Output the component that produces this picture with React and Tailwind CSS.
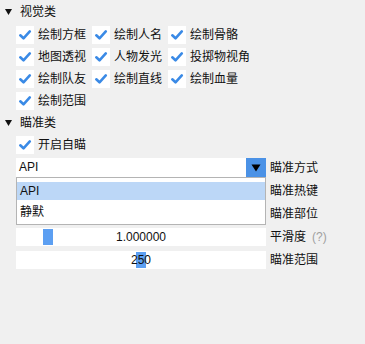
import { useState } from 'react'

const VISUAL = [
  '绘制方框', '绘制人名', '绘制骨骼',
  '地图透视', '人物发光', '投掷物视角',
  '绘制队友', '绘制直线', '绘制血量',
  '绘制范围',
]

function Check({ label }) {
  return (
    <div className="flex items-center h-[18px]">
      <div className="w-[18px] h-[18px] bg-white flex items-center justify-center shrink-0">
        <svg width="14" height="14" viewBox="0 0 14 14">
          <path d="M2.3 7.3 L5.5 10.3 L11.8 3.4" fill="none" stroke="#3a8ae6" strokeWidth="2.6" strokeLinecap="round" strokeLinejoin="round" />
        </svg>
      </div>
      <span className="ml-[4px] whitespace-nowrap">{label}</span>
    </div>
  )
}

function Header({ title }) {
  return (
    <div className="flex items-center h-[18px]">
      <svg className="ml-[5px] mr-[8px]" width="7" height="6" viewBox="0 0 7 6">
        <path d="M0 0 H7 L3.5 6 Z" fill="#111" />
      </svg>
      <span>{title}</span>
    </div>
  )
}

function Slider({ value, grab }) {
  return (
    <div className="relative w-[250px] h-[18px] bg-white flex items-center justify-center">
      <div className="absolute top-[1px] h-[16px] w-[10px] bg-[#5c9ff2]" style={{ left: grab }} />
      <span className="relative">{value}</span>
    </div>
  )
}

export default function App() {
  const [open] = useState(true)

  return (
    <div className="relative w-[365px] h-[344px] bg-[#f0f0f0] overflow-hidden text-[12px] leading-[18px] text-[#111] font-['Liberation_Sans','Noto_Sans_CJK_SC',sans-serif]">
      <div className="pt-[3px]">
        <Header title="视觉类" />

        <div className="mt-[5px] pl-[16px] grid grid-cols-[76px_76px_98px] gap-y-[4px]">
          {VISUAL.map(v => <Check key={v} label={v} />)}
        </div>

        <div className="mt-[4px]">
          <Header title="瞄准类" />
        </div>

        <div className="mt-[4px] pl-[16px]">
          <Check label="开启自瞄" />
        </div>

        <div className="mt-[4px] pl-[16px] flex items-center">
          <div className="w-[230px] h-[19px] bg-white pl-[3px]">API</div>
          <div className="w-[20px] h-[19px] bg-[#4b92e6] flex items-center justify-center">
            <svg width="10" height="8" viewBox="0 0 10 8">
              <path d="M0.5 0.5 H9.5 L5 7.5 Z" fill="#000" />
            </svg>
          </div>
          <span className="ml-[4px]">瞄准方式</span>
        </div>

        <div className="mt-[5px] pl-[16px] flex items-center h-[18px]">
          <div className="w-[250px]" />
          <span className="ml-[4px]">瞄准热键</span>
        </div>

        <div className="mt-[5px] pl-[16px] flex items-center h-[18px]">
          <div className="w-[250px]" />
          <span className="ml-[4px]">瞄准部位</span>
        </div>

        <div className="mt-[5px] pl-[16px] flex items-center">
          <Slider value="1.000000" grab="27px" />
          <span className="ml-[4px]">平滑度</span>
          <span className="ml-[6px] text-[#a0a0a0]">(?)</span>
        </div>

        <div className="mt-[5px] pl-[16px] flex items-center">
          <Slider value="250" grab="120px" />
          <span className="ml-[4px]">瞄准范围</span>
        </div>
      </div>

      {open && (
        <div className="absolute left-[16px] top-[177px] w-[250px] h-[48px] bg-white border border-[#b4b4b4] pt-[4px]">
          <div className="h-[18px] bg-[#bcd7f7] pl-[3px]">API</div>
          <div className="mt-[3px] h-[18px] pl-[3px]">静默</div>
        </div>
      )}
    </div>
  )
}
